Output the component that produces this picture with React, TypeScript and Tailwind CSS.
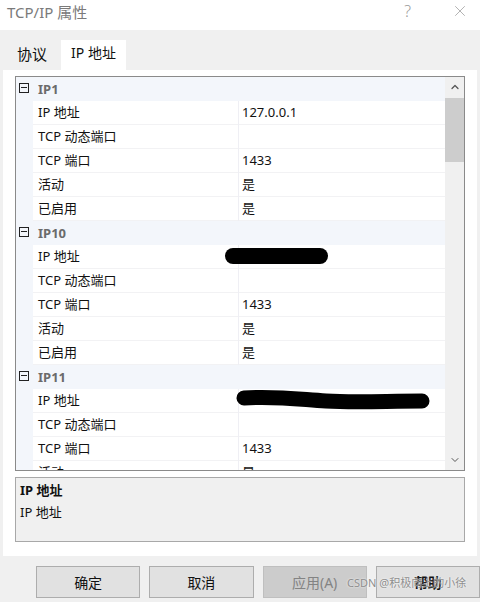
import { X, ChevronUp, ChevronDown } from 'lucide-react'

type Row = { kind: 'cat'; name: string } | { kind: 'item'; name: string; value?: string; redact?: 1 | 2 }

const rows: Row[] = [
  { kind: 'cat', name: 'IP1' },
  { kind: 'item', name: 'IP 地址', value: '127.0.0.1' },
  { kind: 'item', name: 'TCP 动态端口' },
  { kind: 'item', name: 'TCP 端口', value: '1433' },
  { kind: 'item', name: '活动', value: '是' },
  { kind: 'item', name: '已启用', value: '是' },
  { kind: 'cat', name: 'IP10' },
  { kind: 'item', name: 'IP 地址', redact: 1 },
  { kind: 'item', name: 'TCP 动态端口' },
  { kind: 'item', name: 'TCP 端口', value: '1433' },
  { kind: 'item', name: '活动', value: '是' },
  { kind: 'item', name: '已启用', value: '是' },
  { kind: 'cat', name: 'IP11' },
  { kind: 'item', name: 'IP 地址', redact: 2 },
  { kind: 'item', name: 'TCP 动态端口' },
  { kind: 'item', name: 'TCP 端口', value: '1433' },
  { kind: 'item', name: '活动', value: '是' },
]

function BoxMinus() {
  return (
    <div className="w-[10px] h-[10px] border border-[#222] flex items-center justify-center">
      <div className="w-[6px] h-px bg-[#222]" />
    </div>
  )
}

function GridRow({ row }: { row: Row }) {
  if (row.kind === 'cat') {
    return (
      <div className="h-[24px] shrink-0 flex items-center bg-[#f3f6fb]">
        <div className="w-[22px] flex justify-start pl-[3px] -mt-[3px]">
          <BoxMinus />
        </div>
        <span className="ml-[0px] mt-[2px] font-bold text-[13px] text-[#6b6b6b]">{row.name}</span>
      </div>
    )
  }
  return (
    <div className="h-[24px] shrink-0 flex bg-[#f3f6fb]">
      <div className="w-[17px] shrink-0" />
      <div className="w-[205px] shrink-0 bg-white border-b border-[#f2f2f4] flex items-center pl-[5px] pt-[1px] text-[13px] text-[#111]">
        {row.name}
      </div>
      <div className="w-px shrink-0 bg-[#efeff4]" />
      <div className="flex-1 bg-white border-b border-[#f2f2f4] flex items-center pl-[3px] pt-[1px] text-[13px] text-[#111] relative">
        {row.value}
        {row.redact === 1 && (
          <div className="absolute left-[-14px] top-[3px] w-[103px] h-[16px] rounded-full bg-black" />
        )}
        {row.redact === 2 && (
          <svg className="absolute left-[-3px] top-0" width="196" height="24" viewBox="0 0 196 24">
            <path
              d="M8 9 C 40 7, 60 10, 90 12 S 150 12, 186 12"
              stroke="#000"
              strokeWidth="15"
              strokeLinecap="round"
              fill="none"
            />
          </svg>
        )}
      </div>
    </div>
  )
}

export default function App() {
  return (
    <div
      className="w-[480px] h-[602px] bg-[#f0f0f0] relative overflow-hidden flex flex-col"
      style={{ fontFamily: '"Noto Sans", "Noto Sans CJK SC", sans-serif' }}
    >
      {/* Title bar */}
      <div className="h-[30px] shrink-0 bg-white flex items-center pl-[7px]">
        <span className="text-[15px] text-[#7a7a7a] -mt-[6px]">TCP/IP 属性</span>
        <span className="ml-auto text-[16px] font-light text-[#9a9a9a] -mt-[8px]">?</span>
        <X className="ml-[40px] mr-[11px] -mt-[8px] text-[#9a9a9a]" size={18} strokeWidth={1} />
      </div>

      {/* Tabs */}
      <div className="h-[40px] shrink-0 flex items-end pl-[3px]">
        <div className="w-[58px] h-[27px] flex items-center justify-center pb-[4px] text-[15px] text-[#111]">协议</div>
        <div className="w-[65px] h-[30px] bg-white flex items-center justify-center pb-[5px] text-[14px] text-[#111]">
          IP 地址
        </div>
      </div>

      {/* Tab panel */}
      <div className="h-[486px] shrink-0 mx-[3px] bg-white pt-[6px] pl-[12px]">
        {/* Property grid */}
        <div className="w-[450px] h-[395px] border border-[#8a8a8a] flex overflow-hidden">
          <div className="flex-1 flex flex-col overflow-hidden">
            {rows.map((r, i) => (
              <GridRow key={i} row={r} />
            ))}
          </div>
          <div className="w-[19px] shrink-0 bg-[#f0f0f0] flex flex-col items-center">
            <ChevronUp className="mt-[4px] text-[#555]" size={12} strokeWidth={2.5} />
            <div className="mt-[5px] w-[19px] h-[64px] bg-[#cdcdcd]" />
            <ChevronDown className="mt-auto mb-[4px] text-[#555]" size={12} strokeWidth={2} />
          </div>
        </div>

        {/* Description */}
        <div className="mt-[6px] w-[450px] h-[65px] bg-[#f0f0f0] border border-[#a8a8a8] px-[4px] pt-[2px] text-[13px] text-[#111]">
          <div className="font-bold h-[22px] flex items-center">IP 地址</div>
          <div className="h-[22px] flex items-center">IP 地址</div>
        </div>
      </div>

      {/* Buttons */}
      <div className="flex gap-[9px] pl-[36px] mt-[10px]">
        <button className="w-[105px] h-[32px] bg-[#e1e1e1] border border-[#adadad] text-[14px] text-[#111]">确定</button>
        <button className="w-[105px] h-[32px] bg-[#e1e1e1] border border-[#adadad] text-[14px] text-[#111]">取消</button>
        <button className="w-[105px] h-[32px] bg-[#cccccc] border border-[#bfbfbf] text-[14px] text-[#838383]">应用(A)</button>
        <button className="w-[105px] h-[32px] bg-[#e1e1e1] border border-[#adadad] text-[14px] text-[#111] font-bold">帮助</button>
      </div>

      {/* Watermark */}
      <div className="absolute left-[347px] top-[575px] text-[11px] text-[#8e8e8e] whitespace-nowrap [text-shadow:0_0_2px_#fff]">
        CSDN @积极向上的小徐
      </div>
    </div>
  )
}
